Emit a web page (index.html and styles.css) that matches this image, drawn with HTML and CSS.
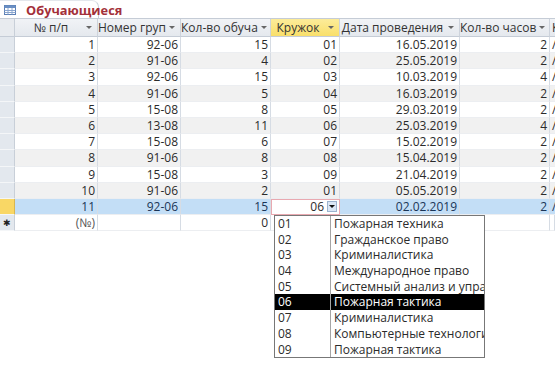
FILE: index.html
```html
<!DOCTYPE html>
<html lang="ru">
<head>
    <meta charset="UTF-8">
    <title>Обучающиеся</title>
    <link rel="stylesheet" href="styles.css">
</head>
<body>
    <div class="tabbar">
        <div class="tab">
            <svg class="tab-icon" width="12" height="10" viewBox="0 0 12 10">
                <rect x="0.5" y="0.5" width="11" height="9" fill="#fff" stroke="#5b7fb5"/>
                <rect x="0.5" y="0.5" width="11" height="2.5" fill="#6a8fc4"/>
                <path d="M0.5 5.5H11.5M0.5 7.5H11.5M4 3V9.5M8 3V9.5" stroke="#8aa6cf" stroke-width="1"/>
            </svg>
            <span>Обучающиеся</span>
        </div>
    </div>

    <div class="sheet">
        <div class="row head">
            <div class="sel corner"></div>
            <div class="hcell first"><span>№ п/п</span><i class="arr"></i></div>
            <div class="hcell"><span>Номер груп</span><i class="arr"></i></div>
            <div class="hcell"><span>Кол-во обуча</span><i class="arr"></i></div>
            <div class="hcell active"><span>Кружок</span><i class="arr"></i></div>
            <div class="hcell"><span>Дата проведения</span><i class="arr"></i></div>
            <div class="hcell"><span>Кол-во часов</span><i class="arr"></i></div>
            <div class="hcell last"><span>К</span></div>
        </div>

        <div class="row"><div class="sel"></div><div class="cell">1</div><div class="cell">92-06</div><div class="cell">15</div><div class="cell">01</div><div class="cell">16.05.2019</div><div class="cell">2</div><div class="cell cut">/</div></div>
        <div class="row alt"><div class="sel"></div><div class="cell">2</div><div class="cell">91-06</div><div class="cell">4</div><div class="cell">02</div><div class="cell">25.05.2019</div><div class="cell">2</div><div class="cell cut">/</div></div>
        <div class="row"><div class="sel"></div><div class="cell">3</div><div class="cell">92-06</div><div class="cell">15</div><div class="cell">03</div><div class="cell">10.03.2019</div><div class="cell">4</div><div class="cell cut">/</div></div>
        <div class="row alt"><div class="sel"></div><div class="cell">4</div><div class="cell">91-06</div><div class="cell">5</div><div class="cell">04</div><div class="cell">16.03.2019</div><div class="cell">2</div><div class="cell cut">/</div></div>
        <div class="row"><div class="sel"></div><div class="cell">5</div><div class="cell">15-08</div><div class="cell">8</div><div class="cell">05</div><div class="cell">29.03.2019</div><div class="cell">2</div><div class="cell cut">/</div></div>
        <div class="row alt"><div class="sel"></div><div class="cell">6</div><div class="cell">13-08</div><div class="cell">11</div><div class="cell">06</div><div class="cell">25.03.2019</div><div class="cell">4</div><div class="cell cut">/</div></div>
        <div class="row"><div class="sel"></div><div class="cell">7</div><div class="cell">15-08</div><div class="cell">6</div><div class="cell">07</div><div class="cell">15.02.2019</div><div class="cell">2</div><div class="cell cut">/</div></div>
        <div class="row alt"><div class="sel"></div><div class="cell">8</div><div class="cell">91-06</div><div class="cell">8</div><div class="cell">08</div><div class="cell">15.04.2019</div><div class="cell">2</div><div class="cell cut">/</div></div>
        <div class="row"><div class="sel"></div><div class="cell">9</div><div class="cell">15-08</div><div class="cell">3</div><div class="cell">09</div><div class="cell">21.04.2019</div><div class="cell">2</div><div class="cell cut">/</div></div>
        <div class="row alt"><div class="sel"></div><div class="cell">10</div><div class="cell">91-06</div><div class="cell">2</div><div class="cell">01</div><div class="cell">05.05.2019</div><div class="cell">2</div><div class="cell cut">/</div></div>
        <div class="row current">
            <div class="sel"></div>
            <div class="cell">11</div>
            <div class="cell">92-06</div>
            <div class="cell">15</div>
            <div class="cell edit"><span>06</span><i class="drop"></i></div>
            <div class="cell">02.02.2019</div>
            <div class="cell">2</div>
            <div class="cell cut">/</div>
        </div>
        <div class="row new">
            <div class="sel">&#10033;</div>
            <div class="cell muted">(№)</div>
            <div class="cell"></div>
            <div class="cell">0</div>
            <div class="cell"></div>
            <div class="cell"></div>
            <div class="cell"></div>
            <div class="cell"></div>
        </div>

        <div class="combo-list">
            <div class="item"><span>01</span><span>Пожарная техника</span></div>
            <div class="item"><span>02</span><span>Гражданское право</span></div>
            <div class="item"><span>03</span><span>Криминалистика</span></div>
            <div class="item"><span>04</span><span>Международное право</span></div>
            <div class="item"><span>05</span><span>Системный анализ и управл</span></div>
            <div class="item picked"><span>06</span><span>Пожарная тактика</span></div>
            <div class="item"><span>07</span><span>Криминалистика</span></div>
            <div class="item"><span>08</span><span>Компьютерные технологии</span></div>
            <div class="item"><span>09</span><span>Пожарная тактика</span></div>
        </div>
    </div>
</body>
</html>
```

FILE: styles.css
```css
html,
body {
    height: 100%;
}
body {
    margin: 0;
    background: #fff;
    font-family: "Open Sans", "Noto Sans", sans-serif;
    color: #2b2b2b;
}
.tabbar {
    height: 18px;
    background: #fff;
}
.tab {
    width: 99px;
    height: 18px;
    padding-left: 4px;
    display: flex;
    align-items: center;
    gap: 10px;
    background: #fff;
    border-top: 1px solid #e3e7ec;
    border-right: 1px solid #c9d0da;
    border-top-right-radius: 7px;
    box-sizing: border-box;
}
.tab-icon {
    flex: none;
}
.tab span {
    font-size: 12.8px;
    font-weight: 700;
    color: #a3303a;
    white-space: nowrap;
}
.sheet {
    position: relative;
}
.row {
    display: grid;
    grid-template-columns: 15px 83px 83px 90px 69px 120px 90px 1fr;
    height: 16.2px;
    font-size: 12px;
    line-height: 16px;
}
.row.head {
    height: 19px;
    line-height: 18px;
    background: linear-gradient(#f1f3f6, #e4e8ed);
    border-top: 1px solid #c5ccd6;
    box-sizing: border-box;
}
.sel {
    background: #e3e8ee;
    border-bottom: 1px solid #f4f6f8;
    border-right: 1px solid #c8cfd8;
    box-sizing: border-box;
    font-size: 9px;
    text-align: center;
    color: #222;
    line-height: 15px;
}
.sel.corner {
    background: #e8ebef;
    border-bottom: 1px solid #c5ccd6;
}
.hcell {
    display: flex;
    align-items: center;
    border-right: 1px solid #cdd3dc;
    border-bottom: 1px solid #c5ccd6;
    color: #333;
    font-size: 12px;
    padding-right: 5px;
    box-sizing: border-box;
    min-width: 0;
    overflow: hidden;
}
.hcell span {
    flex: 1;
    text-align: center;
    white-space: nowrap;
}
.hcell.first span {
    padding-left: 4px;
}
.hcell.active {
    background: linear-gradient(#fcec9a, #f9df6a);
}
.hcell.last {
    border-right: none;
}
.hcell.last span {
    text-align: left;
    padding-left: 2px;
}
.arr {
    flex: none;
    width: 0;
    height: 0;
    border-left: 3px solid transparent;
    border-right: 3px solid transparent;
    border-top: 3px solid #666;
    margin-left: 3px;
}
.cell {
    text-align: right;
    padding-right: 2px;
    border-right: 1px solid #d6dce4;
    box-sizing: border-box;
    white-space: nowrap;
    overflow: hidden;
}
.cell.cut {
    text-align: left;
    padding-left: 2px;
    border-right: none;
}
.row.alt .cell {
    background: #f1f1f1;
}
.row .cell {
    border-bottom: 1px solid #eceef1;
}
.row.current .cell {
    background: #c3def6;
    color: #1a3557;
}
.row.current .sel {
    background: #f9d765;
    border-right-color: #d8b650;
}
.row.current .cell.edit {
    background: #fff;
    border: 1px solid #e9a9b0;
    display: flex;
    align-items: center;
    justify-content: flex-end;
    padding-right: 2px;
    color: #2b2b2b;
}
.drop {
    width: 10px;
    height: 11px;
    margin-left: 3px;
    background: #dbe7f5;
    border: 1px solid #9cb3cf;
    box-sizing: border-box;
    position: relative;
}
.drop::after {
    content: "";
    position: absolute;
    left: 1px;
    top: 3px;
    border-left: 3px solid transparent;
    border-right: 3px solid transparent;
    border-top: 3px solid #111;
}
.muted {
    color: #555;
}
.combo-list {
    position: absolute;
    left: 274px;
    top: 197px;
    width: 211px;
    border: 1px solid #777;
    background: #fff;
    box-sizing: border-box;
    font-size: 12px;
    z-index: 2;
}
.item {
    display: grid;
    grid-template-columns: 55px 1fr;
    height: 15.7px;
    line-height: 15px;
    overflow: hidden;
}
.item span {
    padding-left: 3px;
    white-space: nowrap;
    overflow: hidden;
}
.item span + span {
    border-left: 1px solid #a5a5a5;
    padding-left: 3px;
}
.item.picked {
    background: #000;
    color: #fff;
}
```
